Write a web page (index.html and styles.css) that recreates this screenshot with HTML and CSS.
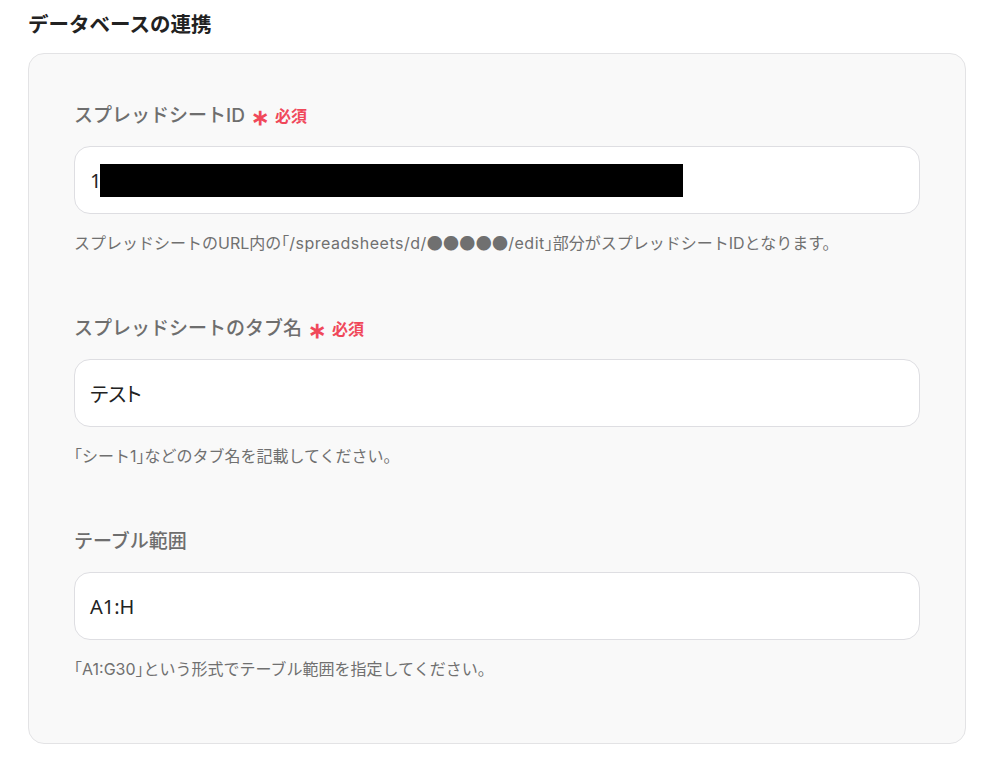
FILE: index.html
```html
<!DOCTYPE html>
<html lang="ja">
<head>
<meta charset="utf-8">
<title>データベースの連携</title>
<link rel="stylesheet" href="styles.css">
</head>
<body>
<div class="page">
  <h2 class="title">データベースの連携</h2>
  <div class="card">
    <div class="field">
      <div class="label">スプレッドシートID<span class="req"><span class="ast">∗</span>必須</span></div>
      <div class="input"><span>1</span><span class="redact"></span></div>
      <div class="help">スプレッドシートのURL内の<span class="br">「</span><span class="path">/spreadsheets/d/</span><span class="dots">●●●●●</span><span class="path">/edit</span><span class="br">」</span>部分がスプレッドシートIDとなります。</div>
    </div>
    <div class="field">
      <div class="label">スプレッドシートのタブ名<span class="req"><span class="ast">∗</span>必須</span></div>
      <div class="input"><span>テスト</span></div>
      <div class="help"><span class="br">「</span>シート1<span class="br">」</span>などのタブ名を記載してください。</div>
    </div>
    <div class="field">
      <div class="label">テーブル範囲</div>
      <div class="input"><span>A1:H</span></div>
      <div class="help"><span class="br">「</span>A1:G30<span class="br">」</span>という形式でテーブル範囲を指定してください。</div>
    </div>
  </div>
</div>
</body>
</html>
```
FILE: styles.css
```css
* { box-sizing: border-box; }
html, body { margin: 0; padding: 0; background: #ffffff; }
body {
  font-family: Inter, "Noto Sans CJK JP", sans-serif;
  color: #222222;
}
.page {
  padding: 11px 38px 0 28px;
}
.title {
  margin: 0;
  font-size: 20.5px;
  line-height: 28px;
  font-weight: 600;
  color: #222222;
}
.card {
  margin-top: 14px;
  width: 938px;
  background: #f9f9f9;
  border: 1px solid #e3e3e5;
  border-radius: 16px;
  padding: 47px 45px 63px;
  display: flex;
  flex-direction: column;
  gap: 60px;
}
.field {
  display: flex;
  flex-direction: column;
}
.label {
  height: 29px;
  font-size: 19px;
  line-height: 26px;
  font-weight: 500;
  color: #6e6e6e;
  display: flex;
  align-items: center;
}
.req {
  margin-left: 6px;
  font-size: 16px;
  font-weight: 700;
  color: #f0485a;
  display: inline-flex;
  align-items: center;
}
.ast {
  font-size: 22px;
  margin-right: 6px;
  margin-top: 3px;
}
.input {
  margin-top: 16px;
  height: 68px;
  background: #ffffff;
  border: 1px solid #dedee2;
  border-radius: 16px;
  padding: 0 15px;
  display: flex;
  align-items: center;
  font-family: "Noto Sans", "Noto Sans CJK JP", sans-serif;
  font-feature-settings: "palt";
  font-size: 20px;
  color: #222222;
}
.redact {
  display: inline-block;
  width: 583px;
  height: 33px;
  background: #000000;
  margin-left: -1px;
}
.help {
  margin-top: 17px;
  font-size: 16px;
  line-height: 22px;
  color: #707070;
}
.br {
  font-family: "Noto Sans CJK JP", sans-serif;
  font-feature-settings: "halt";
}
.path {
  letter-spacing: 0.5px;
}
.dots {
  font-family: "Noto Sans CJK JP", sans-serif;
  letter-spacing: 0.3px;
}
```
